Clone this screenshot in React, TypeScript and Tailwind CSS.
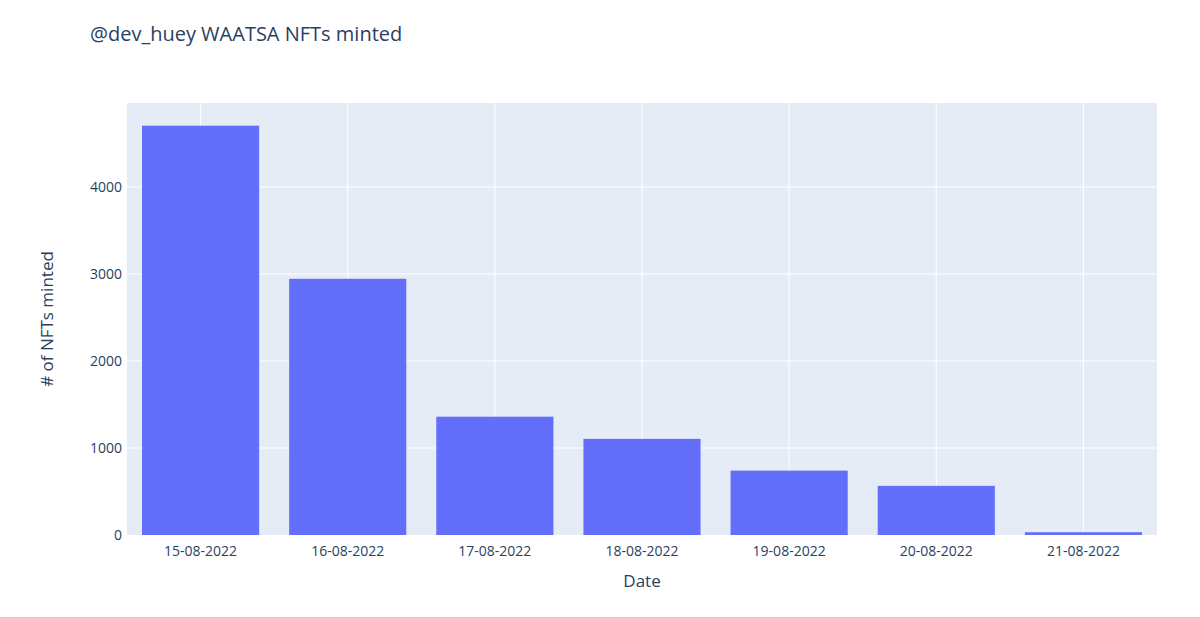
export default function App() {
  const data = [
    ["15-08-2022", 4705],
    ["16-08-2022", 2945],
    ["17-08-2022", 1360],
    ["18-08-2022", 1105],
    ["19-08-2022", 740],
    ["20-08-2022", 565],
    ["21-08-2022", 32],
  ] as const;
  const x0 = 127, x1 = 1157, y0 = 103, y1 = 535;
  const step = (x1 - x0) / 7;
  const k = 0.087;
  return (
    <div className="w-[1200px] h-[617px] bg-white relative" style={{ fontFamily: '"Open Sans", sans-serif' }}>
      <svg width="1200" height="617" className="block">
        <text x="90" y="41" fontSize="20" fill="#2a3f5f">@dev_huey WAATSA NFTs minted</text>
        <rect x={x0} y={y0} width={x1 - x0} height={y1 - y0} fill="#E5ECF6" />
        {data.map((_, i) => (
          <line key={i} x1={x0 + step * (i + 0.5)} x2={x0 + step * (i + 0.5)} y1={y0} y2={y1} stroke="#fff" strokeWidth="1" />
        ))}
        {[1000, 2000, 3000, 4000].map((v) => (
          <line key={v} x1={x0} x2={x1} y1={y1 - v * k} y2={y1 - v * k} stroke="#fff" strokeWidth="1" />
        ))}
        {data.map(([, v], i) => (
          <rect key={i} x={x0 + step * i + 15} y={y1 - v * k} width={step - 30} height={v * k} fill="#636EFA" />
        ))}
        {[0, 1000, 2000, 3000, 4000].map((v) => (
          <text key={v} x="122" y={y1 - v * k + 5} fontSize="14" fill="#2a3f5f" textAnchor="end">{v}</text>
        ))}
        {data.map(([d], i) => (
          <text key={d} x={x0 + step * (i + 0.5)} y="556" fontSize="14" fill="#2a3f5f" textAnchor="middle">{d}</text>
        ))}
        <text x="642" y="587" fontSize="17" fill="#2a3f5f" textAnchor="middle">Date</text>
        <text x="0" y="0" fontSize="17" fill="#2a3f5f" textAnchor="middle" transform="translate(53,319) rotate(-90)"># of NFTs minted</text>
      </svg>
    </div>
  );
}
